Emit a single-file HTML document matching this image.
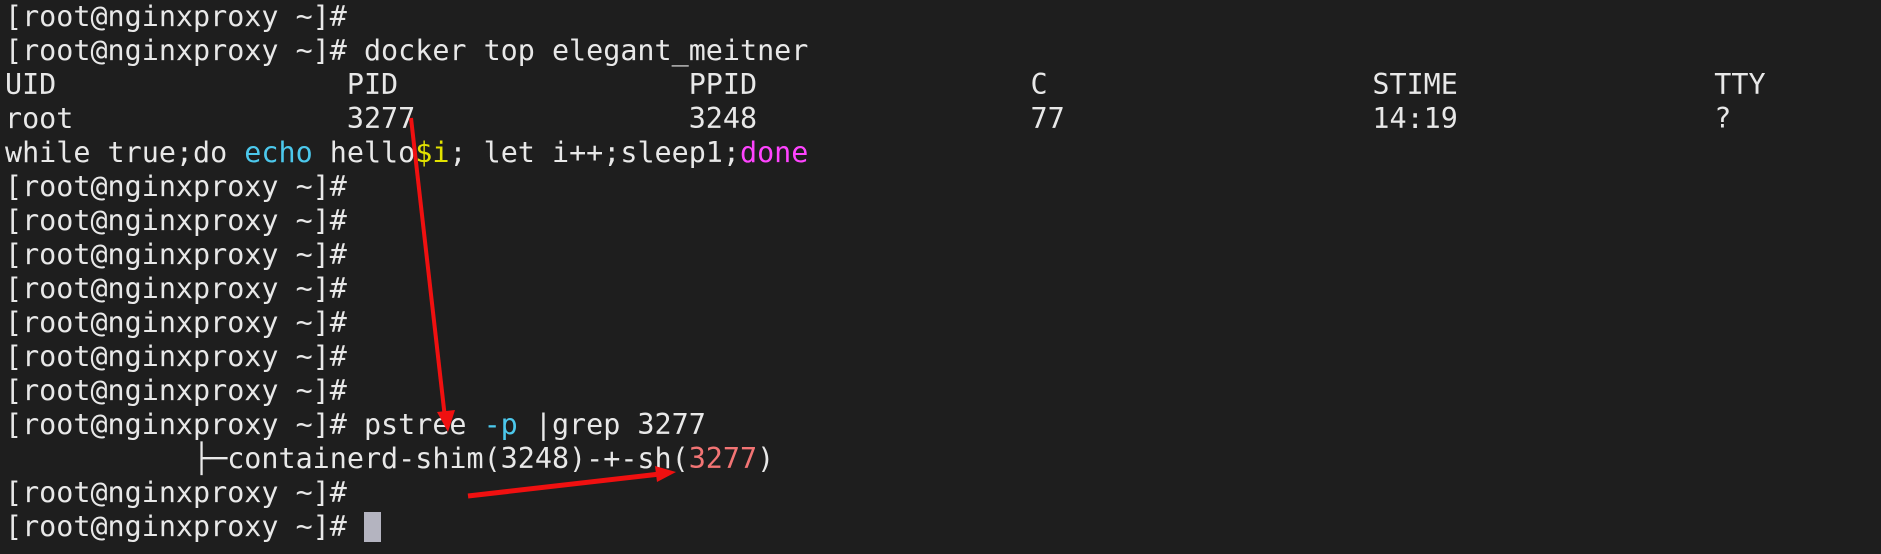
<!DOCTYPE html>
<html><head><style>
html,body{margin:0;padding:0;background:#1e1e1e;width:1881px;height:554px;overflow:hidden}
pre{margin:0;padding:0 0 0 5px;font-family:"DejaVu Sans Mono","Liberation Mono",monospace;font-size:28.4px;line-height:34px;color:#e8e8e8;white-space:pre}
.c{color:#4cc8ec}.y{color:#e2e200}.m{color:#ff44ff}.r{color:#f27474}
.cur{display:inline-block;width:17px;height:30px;background:#b4b4c0;vertical-align:-6px}
svg{position:absolute;left:0;top:0}
</style></head><body>
<pre>[root@nginxproxy ~]#
[root@nginxproxy ~]# docker top elegant_meitner
UID                 PID                 PPID                C                   STIME               TTY
root                3277                3248                77                  14:19               ?
while true;do <span class="c">echo</span> hello<span class="y">$i</span>; let i++;sleep1;<span class="m">done</span>
[root@nginxproxy ~]#
[root@nginxproxy ~]#
[root@nginxproxy ~]#
[root@nginxproxy ~]#
[root@nginxproxy ~]#
[root@nginxproxy ~]#
[root@nginxproxy ~]#
[root@nginxproxy ~]# pstree <span class="c">-p</span> |grep 3277
           ├─containerd-shim(3248)-+-sh(<span class="r">3277</span>)
[root@nginxproxy ~]#
[root@nginxproxy ~]# <span class="cur"></span></pre>
<svg width="1881" height="554">
<line x1="411" y1="118" x2="445" y2="418" stroke="#f01010" stroke-width="4"/>
<polygon points="437,412 455,410 448,432" fill="#f01010"/>
<line x1="468" y1="496" x2="660" y2="474" stroke="#f01010" stroke-width="5"/>
<polygon points="655,466 676,472 657,482" fill="#f01010"/>
</svg>
</body></html>
